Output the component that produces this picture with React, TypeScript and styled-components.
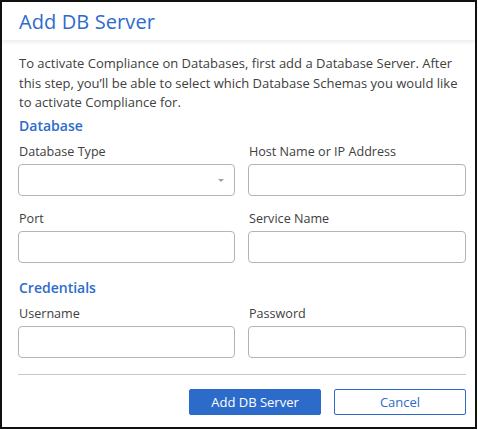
import styled, { createGlobalStyle } from "styled-components";

const GlobalStyle = createGlobalStyle`
  html, body {
    margin: 0;
    padding: 0;
    background: #fff;
  }
  body {
    font-family: "Open Sans", "Liberation Sans", sans-serif;
  }
  * {
    box-sizing: border-box;
  }
`;

const Field = ({ label, select }: { label: string; select?: boolean }) => (
  <FieldBox>
    <Label>{label}</Label>
    <InputBox>{select && <Caret />}</InputBox>
  </FieldBox>
);

export default function App() {
  return (
    <>
      <GlobalStyle />
      <Dialog>
        <Header>
          <Title>Add DB Server</Title>
        </Header>
        <Body>
          <Intro>
            To activate Compliance on Databases, first add a Database Server. After
            this step, you’ll be able to select which Database Schemas you would like
            to activate Compliance for.
          </Intro>
          <Section>Database</Section>
          <Grid>
            <Field label="Database Type" select />
            <Field label="Host Name or IP Address" />
            <Field label="Port" />
            <Field label="Service Name" />
          </Grid>
          <Section>Credentials</Section>
          <Grid>
            <Field label="Username" />
            <Field label="Password" />
          </Grid>
          <Divider />
          <Actions>
            <Button primary>Add DB Server</Button>
            <Button>Cancel</Button>
          </Actions>
        </Body>
      </Dialog>
    </>
  );
}

const Dialog = styled.div`
  width: 477px;
  height: 429px;
  border: 2px solid #111;
  background: #fff;
  display: flex;
  flex-direction: column;
`;

const Header = styled.div`
  height: 38px;
  padding: 0 17px;
  display: flex;
  align-items: center;
  box-shadow: 0 2px 4px rgba(0, 0, 0, 0.08);
  position: relative;
`;

const Title = styled.h1`
  margin: 0;
  font-size: 20px;
  font-weight: 400;
  color: #2d6bcb;
  letter-spacing: 0.1px;
`;

const Body = styled.div`
  padding: 14px 9px 0 16px;
  display: flex;
  flex-direction: column;
`;

const Intro = styled.p`
  margin: 0 0 0 1px;
  max-width: 446px;
  font-size: 13px;
  line-height: 19.5px;
  color: #404040;
`;

const Section = styled.h2`
  margin: 4px 0 0 1px;
  font-size: 14px;
  font-weight: 600;
  color: #2d6bcb;
  line-height: 18px;
`;

const Grid = styled.div`
  display: grid;
  grid-template-columns: 217px 218px;
  column-gap: 13px;
  row-gap: 14px;
  margin-top: 8px;
  margin-bottom: 12px;
`;

const FieldBox = styled.div`
  display: flex;
  flex-direction: column;
`;

const Label = styled.span`
  font-size: 12.6px;
  color: #404040;
  line-height: 18px;
  margin: 0 0 3px 1px;
`;

const InputBox = styled.div`
  height: 32px;
  border: 1px solid #b4b4b4;
  border-radius: 4px;
  position: relative;
`;

const Caret = styled.span`
  position: absolute;
  right: 10px;
  top: 14px;
  width: 0;
  height: 0;
  border-left: 3px solid transparent;
  border-right: 3px solid transparent;
  border-top: 3px solid #a0a0a0;
`;

const Divider = styled.hr`
  margin: 4px 0 0 0;
  border: 0;
  border-top: 1px solid #c8c8c8;
`;

const Actions = styled.div`
  display: flex;
  justify-content: flex-end;
  gap: 13px;
  margin-top: 14px;
`;

const Button = styled.button<{ primary?: boolean }>`
  width: 132px;
  height: 26px;
  font-family: "Open Sans", "Liberation Sans", sans-serif;
  font-size: 13px;
  border-radius: 2px;
  border: 1px solid #2d6bcb;
  background: ${(p) => (p.primary ? "#2d6bcb" : "#fff")};
  color: ${(p) => (p.primary ? "#fff" : "#2d6bcb")};
  cursor: pointer;
`;
